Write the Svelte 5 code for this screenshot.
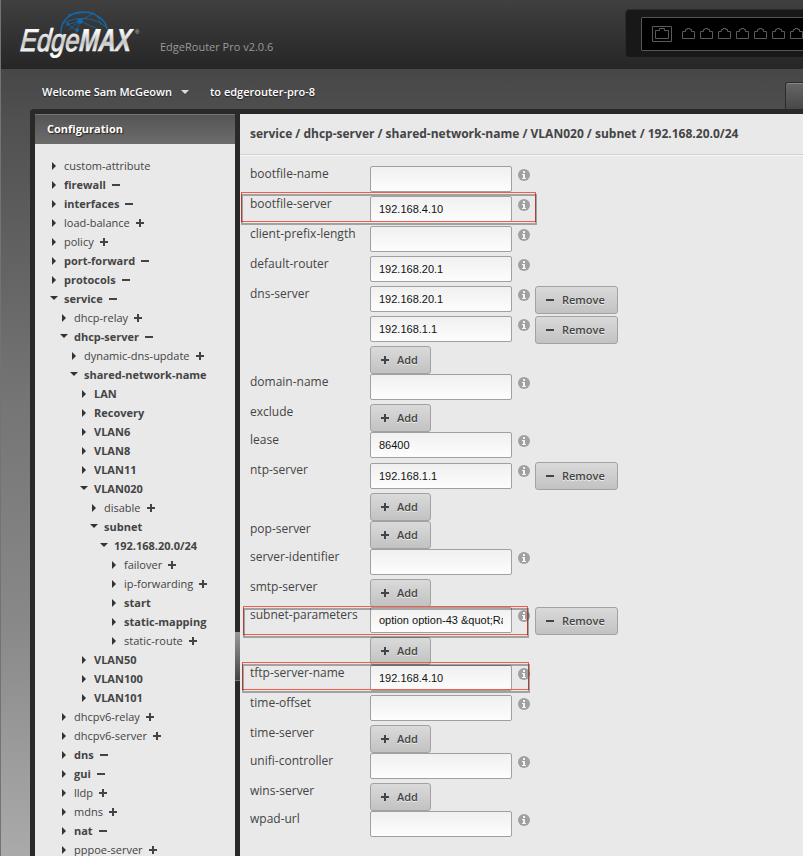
<script>
  const tree = [
    [0, 'custom-attribute', '', 0, 0], [0, 'firewall', '-', 1, 0], [0, 'interfaces', '-', 1, 0],
    [0, 'load-balance', '+', 0, 0], [0, 'policy', '+', 0, 0], [0, 'port-forward', '-', 1, 0],
    [0, 'protocols', '-', 1, 0], [0, 'service', '-', 1, 1], [1, 'dhcp-relay', '+', 0, 0],
    [1, 'dhcp-server', '-', 1, 1], [2, 'dynamic-dns-update', '+', 0, 0], [2, 'shared-network-name', '', 1, 1],
    [3, 'LAN', '', 1, 0], [3, 'Recovery', '', 1, 0], [3, 'VLAN6', '', 1, 0], [3, 'VLAN8', '', 1, 0],
    [3, 'VLAN11', '', 1, 0], [3, 'VLAN020', '', 1, 1], [4, 'disable', '+', 0, 0], [4, 'subnet', '', 1, 1],
    [5, '192.168.20.0/24', '', 1, 1], [6, 'failover', '+', 0, 0], [6, 'ip-forwarding', '+', 0, 0],
    [6, 'start', '', 1, 0], [6, 'static-mapping', '', 1, 0], [6, 'static-route', '+', 0, 0],
    [3, 'VLAN50', '', 1, 0], [3, 'VLAN100', '', 1, 0], [3, 'VLAN101', '', 1, 0],
    [1, 'dhcpv6-relay', '+', 0, 0], [1, 'dhcpv6-server', '+', 0, 0], [1, 'dns', '-', 1, 0],
    [1, 'gui', '-', 1, 0], [1, 'lldp', '+', 0, 0], [1, 'mdns', '+', 0, 0], [1, 'nat', '-', 1, 0],
    [1, 'pppoe-server', '+', 0, 0]
  ].map(([level, name, sign, bold, open]) => ({ level, name, sign, bold, open }));

  const fields = [
    { name: 'bootfile-name', values: [''] },
    { name: 'bootfile-server', values: ['192.168.4.10'], mark: 'm1' },
    { name: 'client-prefix-length', values: [''] },
    { name: 'default-router', values: ['192.168.20.1'] },
    { name: 'dns-server', values: ['192.168.20.1', '192.168.1.1'], multi: true },
    { name: 'domain-name', values: [''] },
    { name: 'exclude', values: [], multi: true },
    { name: 'lease', values: ['86400'] },
    { name: 'ntp-server', values: ['192.168.1.1'], multi: true, tall: true },
    { name: 'pop-server', values: [], multi: true },
    { name: 'server-identifier', values: [''] },
    { name: 'smtp-server', values: [], multi: true },
    { name: 'subnet-parameters', values: ['option option-43 &quot;Ra'], multi: true, mark: 'm2' },
    { name: 'tftp-server-name', values: ['192.168.4.10'], mark: 'm3' },
    { name: 'time-offset', values: [''] },
    { name: 'time-server', values: [], multi: true },
    { name: 'unifi-controller', values: [''] },
    { name: 'wins-server', values: [], multi: true },
    { name: 'wpad-url', values: [''] }
  ];
  const ports = [0, 1, 2, 3, 4, 5, 6];
</script>

{#snippet sign(kind)}
  <svg class="sign" width="8" height="8" viewBox="0 0 8 8">
    <path d={kind === '+' ? 'M0 4h8M4 0v8' : 'M0 4h8'} stroke="#444" stroke-width="2" />
  </svg>
{/snippet}

<div class="page">
  <header>
    <svg class="logo" width="124" height="52" viewBox="0 0 124 52">
      <defs>
        <linearGradient id="silver" x1="0" y1="0" x2="0" y2="1">
          <stop offset="0.2" stop-color="#fff" />
          <stop offset="0.55" stop-color="#c8c8c8" />
          <stop offset="0.85" stop-color="#fafafa" />
        </linearGradient>
      </defs>
      <g fill="none" stroke="#1268a8">
        <path d="M42 26C41 12 52 4 64 4s23 8 24 17" stroke-width="1.4" />
        <path d="M45 15C58 8 77 9 88 20M49 7c10-2 13-2 22-3" stroke-width="1" />
        <path d="M47 17L61 13 75 5M61 13l-4 12M61 13l20 9M49 16l10 8M61 13L50 22M73 4c5 4 7 6 9 13" stroke-width=".8" />
        <circle cx="61" cy="13" r="2.4" fill="#1268a8" />
        <circle cx="49" cy="16" r="1.2" fill="#1268a8" />
        <circle cx="58" cy="22" r="1.5" fill="#1268a8" />
      </g>
      <g font-family="Liberation Sans, sans-serif" font-style="italic" fill="url(#silver)" stroke="url(#silver)" transform="translate(3.500 0) skewX(-5)">
        <text x="1" y="43.500" font-size="31.500" textLength="59" lengthAdjust="spacingAndGlyphs" stroke-width=".9">Edge</text>
        <text x="60" y="43.500" font-size="31.500" font-weight="700" textLength="52" lengthAdjust="spacingAndGlyphs" stroke-width=".6">MAX</text>
      </g>
      <text x="116" y="26" font-family="Liberation Sans, sans-serif" font-size="6" fill="#ccc">®</text>
    </svg>
    <span class="model">EdgeRouter Pro v2.0.6</span>
    <div class="device">
      <div class="screen">
        <svg width="170" height="32" viewBox="0 0 170 32" fill="none" stroke="#5a5a5a">
          <path d="M10.500 8.500h19v15h-19zM13.500 12.500h4v-2h5v2h4v8h-13z" />
          {#each ports as p}
            <path transform={`translate(${40 + p * 18} 0)`} d="M.5 13.500h3v-2h1.500v-1h3v1h1.500v2h3v7H.5z" />
          {/each}
        </svg>
      </div>
    </div>
  </header>

  <nav>
    <span class="welcome">Welcome Sam McGeown</span>
    <i class="caret"></i>
    <span class="host">to edgerouter-pro-8</span>
    <div class="tab"></div>
  </nav>

  <main>
    <aside>
      <h2>Configuration</h2>
      <ul>
        {#each tree as n}
          <li class:bold={n.bold} style:padding-left={`${18 + n.level * 10}px`}>
            <i class="arrow" class:open={n.open}></i>
            <span>{n.name}</span>
            {#if n.sign}{@render sign(n.sign)}{/if}
          </li>
        {/each}
      </ul>
    </aside>
    <div class="splitter"><i></i></div>
    <section>
      <h1>service / dhcp-server / shared-network-name / VLAN020 / subnet / 192.168.20.0/24</h1>
      <form>
        {#each fields as f}
          <div class="field">
            <span class="label">{f.name}</span>
            <div class="values">
              {#each f.values as v}
                <div class="value" class:tall={f.tall}>
                  <div class="input"><span>{v}</span></div>
                  <svg class="info" width="12" height="12" viewBox="0 0 12 12">
                    <circle cx="6" cy="6" r="6" fill="#a0a0a0" />
                    <path d="M5 2h2v2H5zM4 5h3v4h1v1H4V9h1V6H4z" fill="#f4f4f4" />
                  </svg>
                  {#if f.multi}
                    <div class="button remove">{@render sign('-')}<span>Remove</span></div>
                  {/if}
                </div>
              {/each}
              {#if f.multi}
                <div class="button">{@render sign('+')}<span>Add</span></div>
              {/if}
            </div>
            {#if f.mark}<div class={`mark ${f.mark}`}></div>{/if}
          </div>
        {/each}
      </form>
    </section>
  </main>
</div>

<style>
  .page {
    width: 803px;
    height: 856px;
    overflow: hidden;
    display: flex;
    flex-direction: column;
    box-sizing: border-box;
    border-left: 1px solid #737373;
    background: linear-gradient(#474747 69px, #505050 120px, #757575 400px, #888 620px, #aaa 856px);
    font-family: 'Open Sans', 'Noto Sans', sans-serif;
    font-size: 11px;
    color: #444;
  }
  header {
    height: 69px;
    flex: none;
    display: flex;
    align-items: flex-start;
    background: linear-gradient(#404040, #262626);
  }
  .logo { margin: 8px 0 0 18px; flex: none; }
  .model { width: 465px; flex: none; margin: 39px 0 0 17px; line-height: 15px; color: #999; }
  .device {
    flex: none;
    width: 200px;
    height: 49px;
    margin-top: 9px;
    padding: 7px 0 0 15px;
    box-sizing: border-box;
    background: #181818;
    border: 1px solid #2b2b2b;
    border-radius: 4px;
  }
  .screen { height: 32px; border: 1px solid #555; background: #000; border-radius: 1px; }
  .screen svg { display: block; }
  nav {
    height: 40px;
    flex: none;
    display: flex;
    align-items: flex-start;
    padding-left: 41px;
    color: #fff;
    font-weight: 600;
    text-shadow: 0 1px 1px #222;
  }
  nav span { margin-top: 15px; line-height: 16px; white-space: nowrap; }
  .welcome { width: 139px; }
  .caret { border: 4px solid transparent; border-top-color: #ddd; border-bottom: 0; margin-top: 21px; }
  .host { margin-left: 21px; }
  .tab {
    width: 30px;
    height: 26px;
    margin: 13px -14px 0 auto;
    border: 1px solid #2b2b2b;
    border-bottom: 0;
    border-radius: 3px 0 0;
    background: linear-gradient(#666, #484848);
    box-shadow: inset 0 1px #888;
    flex: none;
  }
  main {
    height: 747px;
    margin-left: 29px;
    padding: 5px 0 0 5px;
    box-sizing: border-box;
    background: #292929;
    border-radius: 4px 0 0;
    display: flex;
    overflow: hidden;
  }
  aside { width: 200px; flex: none; background: #e9e9e9; }
  h2 {
    margin: 0;
    height: 30px;
    padding-left: 12px;
    box-sizing: border-box;
    font-size: 11px;
    line-height: 28px;
    color: #fff;
    text-shadow: 1px 1px 1px #222;
    background: linear-gradient(#555, #6c6c6c);
    border-top: 1px solid #777;
  }
  ul { list-style: none; margin: 0; padding: 12px 0 0; }
  li { display: flex; align-items: center; height: 19px; }
  li span { line-height: 19px; white-space: nowrap; }
  .bold { font-weight: 700; }
  .arrow { width: 11px; height: 8px; flex: none; position: relative; }
  .arrow::before {
    content: '';
    position: absolute;
    left: -1px;
    top: 0;
    border: 4px solid transparent;
    border-left-color: #333;
    border-right: 0;
  }
  .arrow.open::before { left: -3px; top: 1px; border: 4px solid transparent; border-top-color: #333; border-bottom: 0; }
  .sign { flex: none; display: block; }
  li .sign { margin-left: 6px; }
  .splitter { width: 5px; flex: none; padding-top: 518px; box-sizing: border-box; }
  .splitter i { display: block; height: 48px; background: linear-gradient(#999, #444); border-bottom: 1px solid #777; }
  section { flex: 1; background: #e9e9e9; min-width: 0; }
  h1 {
    margin: 0;
    height: 41px;
    padding-left: 10px;
    box-sizing: border-box;
    line-height: 39px;
    font-size: 12px;
    white-space: nowrap;
    border-bottom: 1px solid #d0d0d0;
    box-shadow: 0 1px #f8f8f8;
  }
  form { padding: 11px 0 0 10px; }
  .field { display: flex; position: relative; }
  .label { width: 120px; flex: none; height: 16px; line-height: 16px; font-size: 12px; white-space: nowrap; }
  .value { height: 30px; display: flex; align-items: flex-start; }
  .value.tall { height: 31px; }
  .tall .input { margin-top: 1px; }
  .input {
    width: 142px;
    height: 26px;
    box-sizing: border-box;
    padding: 0 8px;
    border: 1px solid #a0a0a0;
    border-radius: 2px;
    background: linear-gradient(#f0f0f0, #fdfdfd);
    font: 11px/25px 'Liberation Sans', Arial, sans-serif;
    color: #111;
  }
  .input span { display: block; overflow: hidden; white-space: nowrap; }
  .info { margin: 3px 0 0 6px; flex: none; }
  .button {
    width: 61px;
    height: 28px;
    box-sizing: border-box;
    display: flex;
    align-items: center;
    padding-left: 10px;
    gap: 8px;
    border: 1px solid #a2a2a2;
    border-radius: 3px;
    background: linear-gradient(#dadada, #c2c2c2);
    font-weight: 600;
    text-shadow: 0 1px #eee;
  }
  .button span { line-height: 26px; }
  .remove { width: 83px; margin-left: 5px; }
  .mark {
    position: absolute;
    box-sizing: border-box;
    border: 1px solid #f85a48;
  }
  .mark::before {
    content: '';
    position: absolute;
    left: -1px;
    top: 1px;
    right: -2px;
    bottom: -4px;
    border: 2px solid rgba(0, 0, 0, .3);
    filter: blur(.6px);
  }
  .m1 { left: -9px; top: -4px; width: 295px; height: 30px; }
  .m2 { left: -7px; top: -1px; width: 285px; height: 29px; }
  .m3 { left: -8px; top: -3px; width: 287px; height: 28px; }
</style>
